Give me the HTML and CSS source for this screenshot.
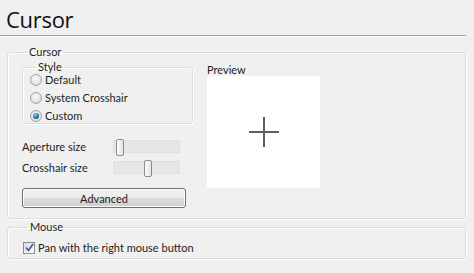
FILE: index.html
```html
<!DOCTYPE html>
<html>
<head>
<meta charset="utf-8">
<link rel="stylesheet" href="styles.css">
</head>
<body>
<div class="page">
  <h1 class="title">Cursor</h1>
  <div class="sep"></div>
  <fieldset class="group cursor-group">
    <legend>Cursor</legend>
    <div class="cols">
      <div class="left">
        <fieldset class="group style-group">
          <legend>Style</legend>
          <label class="radio"><span class="rb"></span>Default</label>
          <label class="radio"><span class="rb"></span>System Crosshair</label>
          <label class="radio"><span class="rb on"></span>Custom</label>
        </fieldset>
        <div class="slider-row first">
          <span class="slabel">Aperture size</span>
          <div class="track"><span class="thumb" style="left:2px"></span></div>
        </div>
        <div class="slider-row">
          <span class="slabel">Crosshair size</span>
          <div class="track"><span class="thumb" style="left:30px"></span></div>
        </div>
        <button class="btn">Advanced</button>
      </div>
      <div class="right">
        <div class="plabel">Preview</div>
        <div class="preview">
          <svg width="30" height="32" viewBox="0 0 30 32">
            <rect x="0" y="15" width="30" height="2" fill="#5f5f5f"/>
            <rect x="14" y="1" width="2" height="30" fill="#5f5f5f"/>
          </svg>
        </div>
      </div>
    </div>
  </fieldset>
  <fieldset class="group mouse-group">
    <legend>Mouse</legend>
    <label class="check"><span class="cb"><svg width="9" height="9" viewBox="0 0 9 9"><path d="M1 4.5 L3.5 7.5 L8 1" fill="none" stroke="#3a5a8c" stroke-width="1.6"/></svg></span>Pan with the right mouse button</label>
  </fieldset>
</div>
</body>
</html>
```
FILE: styles.css
```css
html, body {
  margin: 0;
  padding: 0;
  background: #f0f0f0;
}
body {
  font-family: Lato, "Open Sans", sans-serif;
  font-size: 11px;
  color: #1e1e1e;
  width: 474px;
  height: 273px;
  overflow: hidden;
}
.page {
  padding: 0 8px 0 0;
}
.title {
  margin: 0;
  padding: 5px 0 0 6px;
  height: 30px;
  box-sizing: border-box;
  font-family: "Open Sans", sans-serif;
  font-weight: normal;
  font-size: 22px;
  line-height: 28px;
  color: #111;
  letter-spacing: -0.3px;
}
.sep {
  height: 1px;
  background: #a0a0a0;
  border-bottom: 1px solid #ffffff;
  margin: 5px 0 0 0;
}
.group {
  margin: 0;
  border: 1px solid #d5dfe5;
  box-shadow: inset 1px 1px 0 #fff, 1px 1px 0 #fff;
  border-radius: 3px;
  padding: 0;
}
.group legend {
  padding: 0 2px;
  margin-left: 5px;
  line-height: 12px;
  color: #1e1e1e;
}
.cursor-group {
  margin: 9px 0 0 7px;
  height: 173px;
  box-sizing: border-box;
  padding: 3px 0 0 14px;
}
.cols {
  display: flex;
  gap: 14px;
}
.left {
  width: 171px;
  display: flex;
  flex-direction: column;
}
.style-group {
  height: 63px;
  box-sizing: border-box;
  padding: 0 0 0 7px;
  display: flex;
  flex-direction: column;
  gap: 3px;
}
.style-group legend {
  margin-left: 6px;
}
.style-group .radio:first-of-type {
  margin-top: -1px;
}
.radio, .check {
  display: flex;
  align-items: center;
  height: 15px;
  line-height: 15px;
}
.rb {
  width: 12px;
  height: 12px;
  border-radius: 50%;
  border: 1px solid #a3a3a3;
  background: radial-gradient(circle at 45% 40%, #fafafa 0%, #e4e4e4 60%, #cfcfcf 100%);
  margin-right: 3px;
  box-sizing: border-box;
  position: relative;
  flex: none;
}
.rb.on::after {
  content: "";
  position: absolute;
  left: 2px;
  top: 2px;
  width: 6px;
  height: 6px;
  border-radius: 50%;
  background: radial-gradient(circle at 40% 35%, #8fd6f5 0%, #1c6d98 55%, #0d3d5e 100%);
}
.slider-row {
  display: flex;
  align-items: center;
  height: 18px;
  margin-top: 3px;
}
.slider-row.first {
  margin-top: 13px;
}
.slabel {
  width: 91px;
  flex: none;
}
.track {
  position: relative;
  width: 67px;
  height: 13px;
  background: #e6e6e6;
  border: 1px solid #e0e0e0;
  box-sizing: border-box;
}
.thumb {
  position: absolute;
  top: -2px;
  width: 6px;
  height: 15px;
  border: 1px solid #8c8c8c;
  border-radius: 2px;
  background: linear-gradient(to right, #fdfdfd, #e3e3e3);
}
.btn {
  margin-top: 12px;
  width: 164px;
  height: 20px;
  border: 1px solid #707070;
  border-radius: 3px;
  background: linear-gradient(#f2f2f2 0%, #ebebeb 50%, #dddddd 51%, #cfcfcf 100%);
  font-family: inherit;
  font-size: 11px;
  color: #1e1e1e;
  padding: 0;
  box-shadow: inset 0 0 0 1px #fcfcfc;
}
.right {
  display: flex;
  flex-direction: column;
  padding-top: 2px;
}
.plabel {
  line-height: 14px;
  height: 14px;
}
.preview {
  margin-top: -1px;
  width: 113px;
  height: 112px;
  background: #fff;
  display: flex;
  align-items: center;
  justify-content: center;
}
.mouse-group {
  margin: 2px 0 0 7px;
  height: 38px;
  box-sizing: border-box;
  padding: 7px 0 0 15px;
}
.cb {
  width: 12px;
  height: 12px;
  border: 1px solid #8f8f8f;
  background: linear-gradient(135deg, #dcdcdc, #fbfbfb);
  box-sizing: border-box;
  margin-right: 3px;
  display: flex;
  align-items: center;
  justify-content: center;
  flex: none;
}
```
